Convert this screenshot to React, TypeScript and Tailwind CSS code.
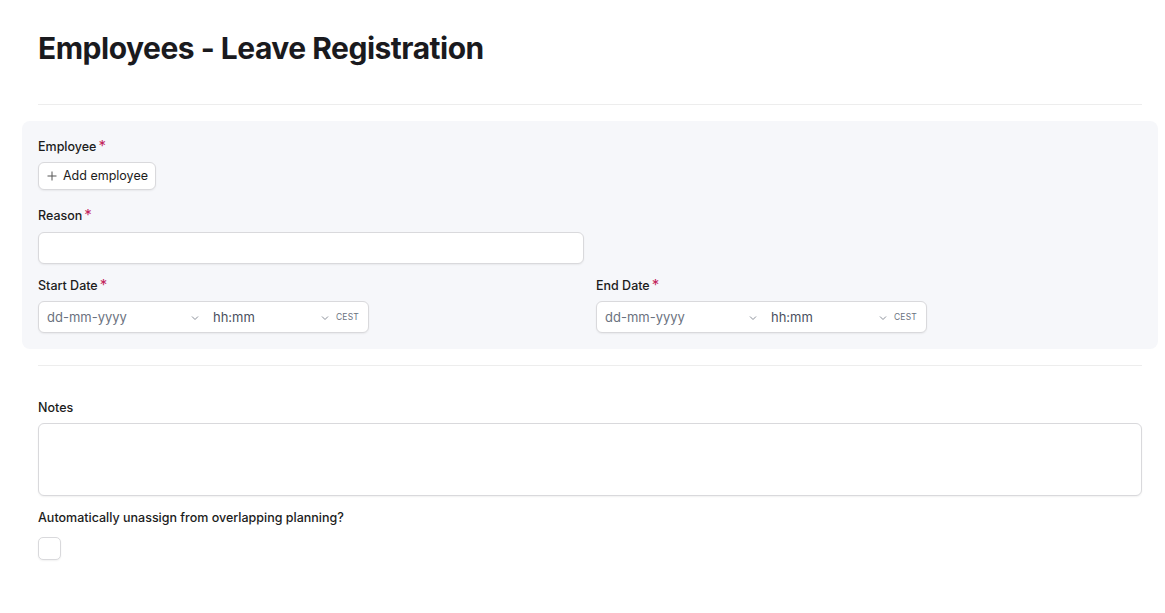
import React from 'react'

const labelFont = { fontFamily: 'Inter, "Noto Sans", sans-serif' }

const Star = () => (
  <span className="ml-[2px] -mt-[5px] text-[15px] font-normal leading-none text-[#c2255c]">*</span>
)

const Label: React.FC<{ text: string; required?: boolean }> = ({ text, required }) => (
  <div className="flex h-5 items-center pt-px text-[12.5px] font-medium text-[#1c1c1c]">
    <span>{text}</span>
    {required && <Star />}
  </div>
)

const Chevron = () => (
  <svg width="10" height="10" viewBox="0 0 10 10" className="text-[#8a8f99]">
    <path d="M2 3.5 L5 6.5 L8 3.5" fill="none" stroke="currentColor" strokeWidth="1" />
  </svg>
)

const DateTimeInput = () => (
  <div className="flex h-8 w-[331px] items-center rounded-md border border-[#d9d9dc] bg-white text-[13px] text-[#6b7280] shadow-[0_1px_2px_rgba(0,0,0,0.06)]">
    <div className="flex w-[166px] items-center justify-between pt-[2px] pl-2 pr-[5px]">
      <span>dd-mm-yyyy</span>
      <Chevron />
    </div>
    <div className="flex flex-1 items-center justify-between pt-[2px] pl-2 pr-[6px]">
      <span className="text-[#4b5160]">hh:mm</span>
      <Chevron />
    </div>
    <span className="pr-[9px] text-[8.5px] tracking-wide text-[#6b7280]">CEST</span>
  </div>
)

export default function App() {
  return (
    <div className="min-h-screen bg-white px-[38px] pt-[28px]" style={labelFont}>
      <h1 className="text-[30px] font-bold leading-[40px] tracking-[-0.5px] text-[#1a1a1e]">
        Employees - Leave Registration
      </h1>

      <div className="mt-[36px] h-px w-[1104px] bg-[#ededed]" />

      <div className="-mx-4 mt-4 flex w-[1136px] flex-col gap-3 rounded-lg bg-[#f6f7fa] p-4">
        <div className="flex flex-col gap-[5px]">
          <Label text="Employee" required />
          <div className="h-8">
            <button
              type="button"
              className="flex h-[28px] items-center gap-[6px] rounded-md border border-[#d9d9dc] bg-white pl-2 pr-[7px] text-[12.5px] text-[#1c1c1c] shadow-[0_1px_2px_rgba(0,0,0,0.06)]"
            >
              <svg width="10" height="10" viewBox="0 0 10 10" className="text-[#555]">
                <path d="M5 0.5 V9.5 M0.5 5 H9.5" stroke="currentColor" strokeWidth="1" />
              </svg>
              Add employee
            </button>
          </div>
        </div>

        <div className="flex flex-col gap-[6px]">
          <Label text="Reason" required />
          <div className="grid grid-cols-2 gap-3">
            <div className="h-8 rounded-md border border-[#d9d9dc] bg-white shadow-[0_1px_2px_rgba(0,0,0,0.06)]" />
          </div>
        </div>

        <div className="grid grid-cols-2 gap-3">
          <div className="flex flex-col gap-[5px]">
            <Label text="Start Date" required />
            <DateTimeInput />
          </div>
          <div className="flex flex-col gap-[5px]">
            <Label text="End Date" required />
            <DateTimeInput />
          </div>
        </div>
      </div>

      <div className="mt-4 h-px w-[1104px] bg-[#ededed]" />

      <div className="mt-[32px] flex w-[1104px] flex-col gap-[5px]">
        <Label text="Notes" />
        <div className="h-[73px] rounded-md border border-[#d9d9dc] bg-white shadow-[0_1px_2px_rgba(0,0,0,0.06)]" />
      </div>

      <div className="mt-3 flex flex-col gap-[9px]">
        <Label text="Automatically unassign from overlapping planning?" />
        <div className="h-[23px] w-[23px] rounded-[5px] border border-[#d9d9dc] bg-white shadow-[0_1px_2px_rgba(0,0,0,0.06)]" />
      </div>
    </div>
  )
}
